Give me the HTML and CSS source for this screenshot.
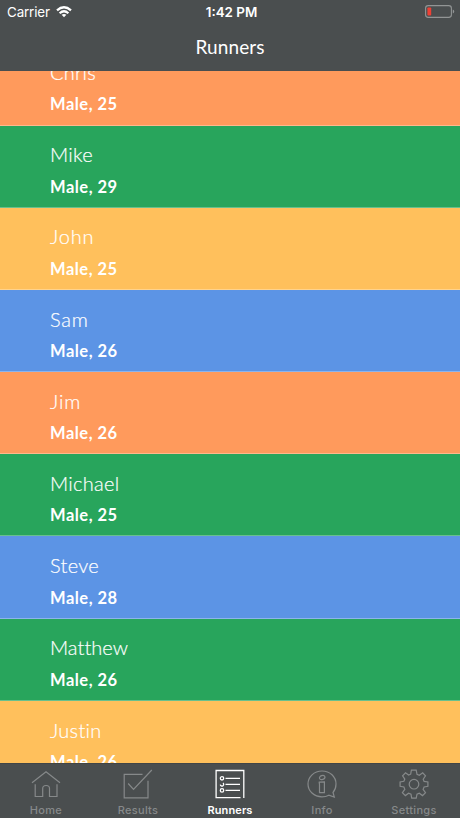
FILE: index.html
```html
<!DOCTYPE html>
<html lang="en">
<head>
<meta charset="utf-8">
<title>Runners</title>
<link rel="stylesheet" href="styles.css">
</head>
<body>
<div class="app">
  <header class="header">
    <div class="status">
      <div class="carrier"><span>Carrier</span>
        <svg class="wifi" width="16" height="12" viewBox="0 0 16 12" fill="none" stroke="#fff" stroke-width="2.2"><path d="M1 4.4Q8-1.9 15 4.4M3.6 7.2Q8 3.3 12.4 7.2"/><path d="M8 11.2 5.6 8.8Q8 7 10.4 8.8Z" fill="#fff" stroke="none"/></svg>
      </div>
      <div class="time">1:42 PM</div>
      <div class="power">
        <svg width="30" height="14" viewBox="0 0 30 14"><rect x=".6" y=".6" width="25.8" height="11.8" rx="2.6" fill="none" stroke="#929595" stroke-width="1.1"/><rect x="2.4" y="2.5" width="3.8" height="8" rx=".8" fill="#ee4035"/><path d="M27.8 4.5Q29.2 5 29.2 6.5T27.8 8.5Z" fill="#929595"/></svg>
      </div>
    </div>
    <h1 class="title">Runners</h1>
  </header>
  <main class="list">
    <div class="rows">
      <section class="row orange"><div class="name">Chris</div><div class="detail">Male, 25</div></section>
      <section class="row green"><div class="name">Mike</div><div class="detail">Male, 29</div></section>
      <section class="row yellow"><div class="name wide">John</div><div class="detail">Male, 25</div></section>
      <section class="row blue"><div class="name wide">Sam</div><div class="detail">Male, 26</div></section>
      <section class="row orange"><div class="name wide">Jim</div><div class="detail">Male, 26</div></section>
      <section class="row green"><div class="name">Michael</div><div class="detail">Male, 25</div></section>
      <section class="row blue"><div class="name">Steve</div><div class="detail">Male, 28</div></section>
      <section class="row green"><div class="name tight">Matthew</div><div class="detail">Male, 26</div></section>
      <section class="row yellow"><div class="name">Justin</div><div class="detail">Male, 26</div></section>
    </div>
  </main>
  <nav class="tabs">
    <a class="tab"><svg class="icon" viewBox="0 0 30 30"><path d="M1 13.7 15 2.8 29 13.7M4.2 15.2V27.5H11.7V19.5Q11.7 16.5 15.1 16.5T18.5 19.5V27.5H26V15.2"/></svg><span>Home</span></a>
    <a class="tab"><svg class="icon" viewBox="0 0 30 30"><path d="M19.5 5.3H1.2V28.8H25V11.8M5.2 14.5 10.5 20.3 28.8 1"/></svg><span>Results</span></a>
    <a class="tab active"><svg class="icon" viewBox="0 0 30 30"><path d="M25.5 28.6H1.1V1.5H28.8V29M10.5 9.3H25M10.5 15.4H25M10.5 21.4H25"/><circle cx="7" cy="9.3" r="1.7"/><path d="M5.3 15.6A1.7 1.7 0 1 0 8 14"/><circle cx="7" cy="21.4" r="1.7"/></svg><span>Runners</span></a>
    <a class="tab"><svg class="icon" viewBox="0 0 30 30"><path d="M21.8 26.2Q18.8 27.8 15 27.8C7 27.8 1 22.1 1 15S7 2 15 2s14 5.8 14 13q0 5-3 8.5L27.3 28Z"/><ellipse cx="15.2" cy="8.5" rx="2.8" ry="2" transform="rotate(-18 15.2 8.5)"/><path d="M12.2 13.2 17.4 12.8V23.7H12.5V15.5Z"/></svg><span>Info</span></a>
    <a class="tab"><svg class="icon" viewBox="0 0 30 30"><path d="M12.4 1.2H17.2L18 5.2 20.3 6.2 23.7 3.8 26.5 6.8 24.2 10.2 25.1 12.4 28.9 13V17.3L25.1 18 24.1 20.3 26.5 23.6 23.5 26.6 20.3 24.2 18 25.2 17.2 29.2H12.7L12 25.2 9.6 24.2 6.4 26.6 3.4 23.6 5.8 20.3 4.9 18 1.1 17.3V13L4.9 12.3 5.8 10.1 3.6 6.8 6.5 3.8 9.6 6.1 11.7 5.2Z"/><circle cx="15" cy="15.2" r="4.8"/></svg><span>Settings</span></a>
  </nav>
</div>
</body>
</html>
```
FILE: styles.css
```css
* {
  box-sizing: border-box;
}

body {
  margin: 0;
  font-family: Lato, "Liberation Sans", sans-serif;
  color: #fff;
}

.app {
  display: flex;
  flex-direction: column;
  width: 460px;
  height: 818px;
  overflow: hidden;
  background: #4a4e4f;
}

.header {
  flex: 0 0 71px;
}

.status {
  display: grid;
  grid-template-columns: 1fr auto 1fr;
  align-items: center;
  height: 24px;
  padding: 0 5px 0 7px;
  font: 13.4px/24px Inter, sans-serif;
}

.carrier {
  display: flex;
  align-items: center;
  gap: 6px;
  letter-spacing: -0.15px;
}

.time {
  padding-left: 1px;
  font-weight: 600;
}

.power {
  display: flex;
  justify-content: flex-end;
}

.title {
  margin: 0;
  font-size: 19px;
  font-weight: 400;
  line-height: 46px;
  letter-spacing: 0.1px;
  text-align: center;
}

.list {
  flex: 1;
  min-height: 0;
  overflow: hidden;
}

.rows {
  margin-top: -27.7px;
}

.row {
  height: 82.2px;
  padding: 17.8px 0 0 50px;
  border-bottom: 1px solid rgba(255, 255, 255, 0.3);
}

.name {
  font-size: 20px;
  font-weight: 300;
  line-height: 23px;
  letter-spacing: 0.3px;
  font-variant-ligatures: none;
  -webkit-text-stroke: 0.2px #fff;
}

.name.wide {
  letter-spacing: 0.8px;
}

.name.tight {
  letter-spacing: 0.05px;
}

.detail {
  margin-top: 10.3px;
  font-size: 16.5px;
  font-weight: 700;
  line-height: 20px;
  letter-spacing: 0.5px;
}

.orange {
  background-color: #ff9a5c;
}

.green {
  background-color: #28a55c;
}

.yellow {
  background-color: #ffc05c;
}

.blue {
  background-color: #5c94e5;
}

.tabs {
  display: grid;
  grid-template-columns: repeat(5, 1fr);
  flex: 0 0 55px;
  border-top: 1px solid #414546;
}

.tab {
  display: flex;
  flex-direction: column;
  align-items: center;
  padding-top: 5px;
  color: #86898a;
  font: 500 11px/14px Inter, sans-serif;
  letter-spacing: 0.3px;
}

.tab span {
  margin-top: 4px;
}

.tab.active {
  color: #fff;
  font-weight: 600;
  letter-spacing: 0.1px;
}

.icon {
  width: 30px;
  height: 30px;
  fill: none;
  stroke: currentColor;
  stroke-width: 1.2;
}

.active .icon {
  stroke-width: 1.3;
}
```
